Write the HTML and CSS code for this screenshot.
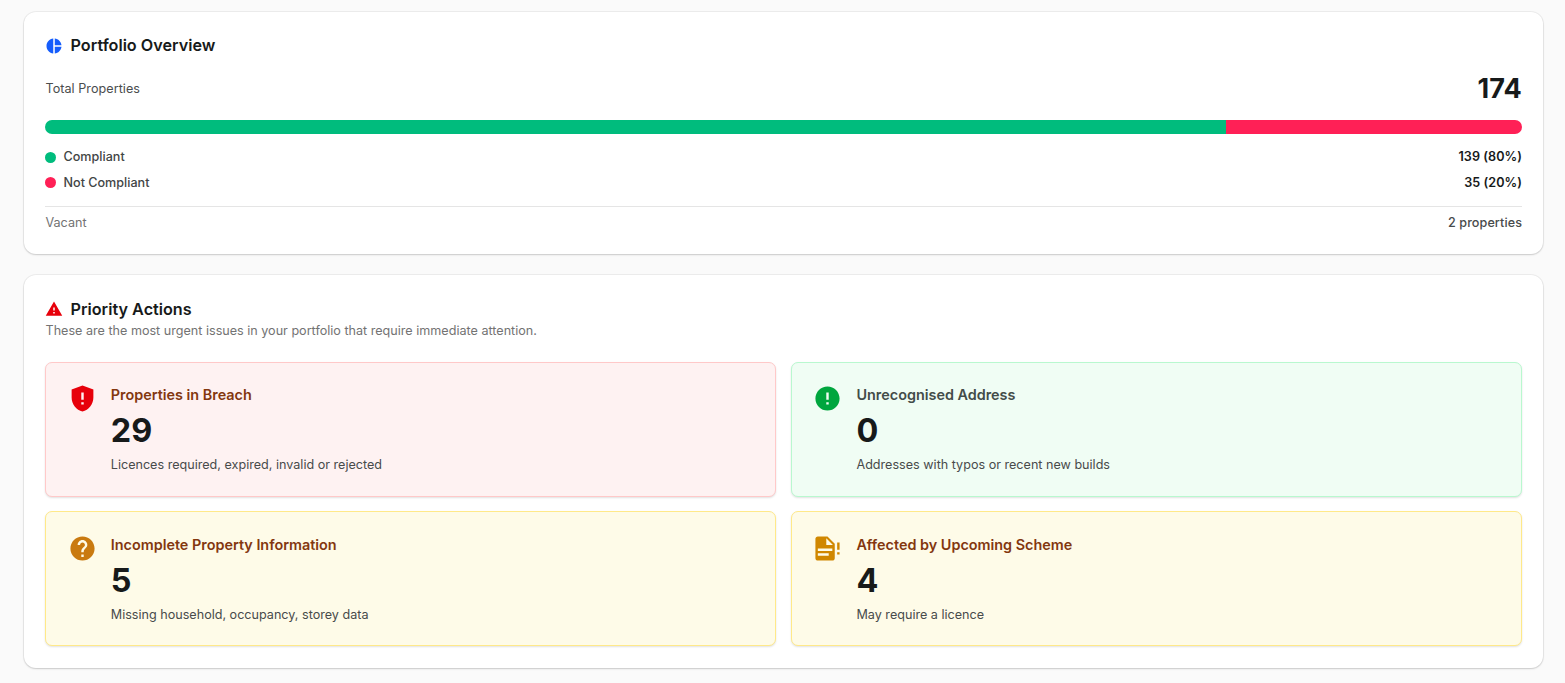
FILE: index.html
```html
<!DOCTYPE html>
<html lang="en">
<head>
<meta charset="utf-8">
<title>Portfolio Overview</title>
<link rel="stylesheet" href="styles.css">
</head>
<body>
<main class="page">
  <section class="card">
    <h2 class="card-title">
      <svg class="title-icon blue" viewBox="0 0 24 24"><path d="M11 2v20c-5.07-.5-9-4.79-9-10s3.930-9.500 9-10zm2.030 0v8.990H22c-.47-4.740-4.240-8.520-8.970-8.990zm0 11.010V22c4.740-.47 8.500-4.250 8.970-8.990h-8.970z"/></svg>
      <span>Portfolio Overview</span>
    </h2>
    <div class="total"><span class="total-label">Total Properties</span><strong class="total-value">174</strong></div>
    <div class="bar"><div class="bar-ok"></div><div class="bar-bad"></div></div>
    <div class="legend">
      <div class="row"><span class="key"><i class="dot ok"></i>Compliant</span><span class="value">139 (80%)</span></div>
      <div class="row"><span class="key"><i class="dot bad"></i>Not Compliant</span><span class="value">35 (20%)</span></div>
    </div>
    <div class="row vacant"><span>Vacant</span><span class="vacant-value">2 properties</span></div>
  </section>

  <section class="card">
    <h2 class="card-title">
      <svg class="title-icon red" viewBox="0 0 24 24"><path d="M1 21h22L12 2 1 21zm12-3h-2v-2h2v2zm0-4h-2v-4h2v4z"/></svg>
      <span>Priority Actions</span>
    </h2>
    <p class="intro">These are the most urgent issues in your portfolio that require immediate attention.</p>
    <div class="grid">
      <article class="tile tile-red">
        <svg class="tile-icon red" viewBox="0 0 24 24"><path d="M12 1.200 3 4.500v6.600c0 5.450 3.840 10.400 9 11.700 5.160-1.300 9-6.250 9-11.700V4.500L12 1.200zm1 15.800h-2v-2h2v2zm0-4h-2V7h2v6z"/></svg>
        <div><h3 class="tile-title">Properties in Breach</h3><div class="tile-number">29</div><p class="tile-text">Licences required, expired, invalid or rejected</p></div>
      </article>
      <article class="tile tile-green">
        <svg class="tile-icon green" viewBox="0 0 24 24"><path d="M12 2C6.480 2 2 6.480 2 12s4.480 10 10 10 10-4.480 10-10S17.520 2 12 2zm1 15h-2v-2h2v2zm0-4h-2V7h2v6z"/></svg>
        <div><h3 class="tile-title muted">Unrecognised Address</h3><div class="tile-number">0</div><p class="tile-text">Addresses with typos or recent new builds</p></div>
      </article>
      <article class="tile tile-yellow">
        <svg class="tile-icon amber" viewBox="0 0 24 24"><path d="M12 2C6.480 2 2 6.480 2 12s4.480 10 10 10 10-4.480 10-10S17.520 2 12 2zm1 17h-2v-2h2v2zm2.070-7.750-.9.920C13.450 12.900 13 13.500 13 15h-2v-.5c0-1.100.45-2.100 1.170-2.830l1.240-1.260c.37-.36.59-.86.59-1.410 0-1.100-.9-2-2-2s-2 .9-2 2H8c0-2.210 1.790-4 4-4s4 1.790 4 4c0 .88-.36 1.680-.93 2.250z"/></svg>
        <div><h3 class="tile-title">Incomplete Property Information</h3><div class="tile-number">5</div><p class="tile-text">Missing household, occupancy, storey data</p></div>
      </article>
      <article class="tile tile-yellow">
        <svg class="tile-icon gold" viewBox="0 0 24 24"><path fill-rule="evenodd" d="M4 2h8l6 6v12c0 1.100-.9 2-2 2H4c-1.100 0-2-.9-2-2V4c0-1.100.9-2 2-2zm7 1.500V9h5.500L11 3.500zM4 12v2h12v-2H4zm0 4v2h9v-2H4zM20 7h2v6h-2V7zm0 8h2v2h-2v-2z"/></svg>
        <div><h3 class="tile-title">Affected by Upcoming Scheme</h3><div class="tile-number">4</div><p class="tile-text">May require a licence</p></div>
      </article>
    </div>
  </section>
</main>
</body>
</html>
```

FILE: styles.css
```css
* { box-sizing: border-box; margin: 0; padding: 0; }
body { background: #fafafa; color: #171a1a; font-family: Inter, "Liberation Sans", sans-serif; font-size: 12.6px; line-height: 18px; }
.page { display: flex; flex-direction: column; gap: 21.4px; padding: 12px 22px 14px 24px; }
.card { background: #fff; border-radius: 12px; padding: 21px 21px 22px; box-shadow: 0 0 0 1px rgba(0,0,0,.05), 0 1px 2px rgba(0,0,0,.15); }
.card-title { display: flex; align-items: center; gap: 7.5px; height: 24.6px; font-size: 16.2px; font-weight: 600; }
.title-icon { width: 18px; height: 18px; flex: none; fill: currentColor; }
.title-icon.blue { margin-top: 1px; }
.blue { color: #155dfc; }
.red { color: #e7000b; }
.green { color: #00a63e; }
.amber { color: #c97a10; }
.gold { color: #d08700; }
.total { display: flex; align-items: center; justify-content: space-between; height: 36px; margin-top: 13.4px; }
.total-label { padding-left: .5px; color: #4a4d4d; letter-spacing: .04px; }
.total-value { font-size: 27px; font-weight: 700; letter-spacing: .15px; }
.bar { display: flex; height: 14px; margin-top: 13px; border-radius: 7px; overflow: hidden; }
.bar-ok { width: 79.95%; background: #00bc7d; }
.bar-bad { flex: 1; background: #ff2056; }
.legend { display: flex; flex-direction: column; gap: 7.6px; padding: 14.1px 0 14.3px; border-bottom: 1px solid #e5e5e5; }
.row { display: flex; align-items: center; justify-content: space-between; }
.key { display: flex; align-items: center; gap: 7.5px; color: #424545; font-weight: 500; }
.dot { width: 11px; height: 11px; border-radius: 50%; }
.ok { background: #00bc7d; }
.bad { background: #ff2056; }
.value { font-weight: 600; letter-spacing: .06px; }
.vacant { margin-top: 7px; padding-left: .5px; color: #737373; }
.vacant-value { color: #484b4b; font-weight: 500; letter-spacing: .08px; }
.intro { margin-top: 1px; padding-left: .5px; color: #737373; }
.grid { display: grid; grid-template-columns: 1fr 1fr; gap: 14.4px; margin-top: 22px; }
.tile { display: flex; align-items: flex-start; gap: 14.2px; height: 135px; padding: 20.2px 21.6px; border: 1px solid; border-radius: 7px; box-shadow: 0 1px 2px rgba(0,0,0,.12); }
.tile-red { background: #fef2f2; border-color: #ffc9c9; }
.tile-green { background: #f0fdf4; border-color: #b9f8cf; }
.tile-yellow { background: #fefbe8; border-color: #ffe989; }
.tile-icon { width: 29px; height: 29px; margin-top: 1px; flex: none; fill: currentColor; }
.tile-title { font-size: 14.4px; line-height: 24px; font-weight: 600; color: #83370f; }
.muted { color: #434c49; }
.tile-number { margin-top: 3px; font-size: 32.4px; line-height: 42px; font-weight: 700; }
.tile-text { margin-top: 4px; color: #484b4b; }
```
